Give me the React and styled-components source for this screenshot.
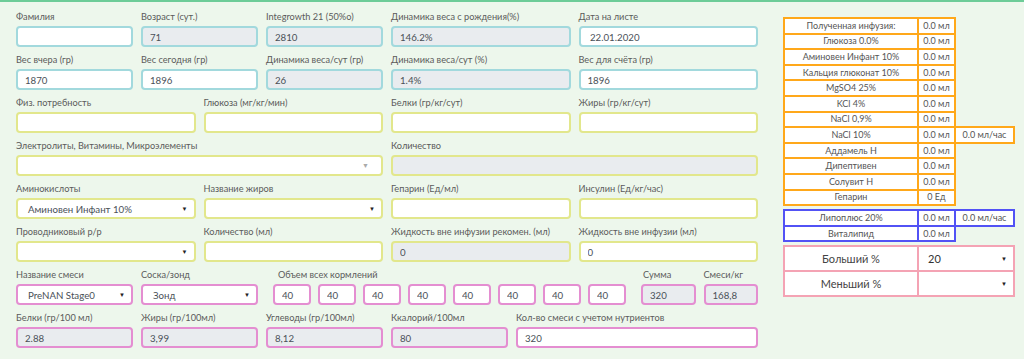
import React from "react";
import styled, { createGlobalStyle } from "styled-components";

const GlobalStyle = createGlobalStyle`
  html, body {
    margin: 0;
    padding: 0;
    background: #edf7ec;
  }
  body {
    font-family: Lato, "Open Sans", sans-serif;
  }
`;

const tones = {
  teal: "#a2d9dd",
  yellow: "#e2e78c",
  pink: "#e48ed1",
};

const Page = styled.div`
  display: flex;
  align-items: flex-start;
  gap: 25px;
  min-height: 359px;
  box-sizing: border-box;
  padding: 9px 0 0 16px;
  border-top: 2px solid #6dcc98;
  background: #edf7ec;
`;

const Form = styled.div`
  width: 742px;
  flex-shrink: 0;
  display: flex;
  flex-direction: column;
  gap: 7px;
`;

const Row = styled.div`
  display: grid;
  grid-template-columns: repeat(12, 1fr);
  column-gap: 8px;
`;

const Field = styled.div`
  grid-column: span ${(p) => p.$span || 2};
  display: flex;
  flex-direction: column;
  min-width: 0;
`;

const Label = styled.label`
  font-size: 9.2px;
  line-height: 12px;
  color: #5b5b5b;
  margin-bottom: 3px;
  padding-left: ${(p) => p.$indent || 0}px;
  white-space: nowrap;
`;

const Input = styled.input`
  box-sizing: border-box;
  width: 100%;
  height: 21px;
  margin: 0;
  padding: 0 7px;
  border: 2px solid ${(p) => tones[p.$tone]};
  border-radius: 4px;
  background: ${(p) => (p.$grey ? "#e9ecef" : "#fff")};
  font: 9.7px Lato, "Open Sans", sans-serif;
  color: #495057;
  outline: none;
`;

const Select = styled.div`
  box-sizing: border-box;
  height: 21px;
  display: flex;
  align-items: center;
  justify-content: space-between;
  padding: 0 6px 0 10px;
  border: 2px solid ${(p) => tones[p.$tone]};
  border-radius: 4px;
  background: #fff;
  font-size: 9.7px;
  color: #495057;
  white-space: nowrap;
`;

const Arrow = styled.span`
  font-size: ${(p) => (p.$muted ? "7px" : "6px")};
  color: ${(p) => (p.$muted ? "#aaa" : "#222")};
  margin-right: ${(p) => (p.$muted ? "6px" : "0")};
  line-height: 1;
`;

const Feeds = styled.div`
  display: flex;
  gap: 7px;
  padding: 0 7px;
`;

const Side = styled.div`
  width: 230px;
  margin-top: 6px;
  display: flex;
  flex-direction: column;
  gap: 3px;
`;

const InfTable = styled.table`
  border-collapse: collapse;
  table-layout: fixed;
  width: 230px;
  font-size: 9px;
  color: #555;

  td {
    border: 2px solid ${(p) => p.$color};
    background: #fff;
    padding: 0;
    height: 13.6px;
    line-height: 12px;
    text-align: center;
    white-space: nowrap;
    overflow: hidden;
  }
`;

const ChoiceTable = styled.table`
  border-collapse: collapse;
  table-layout: fixed;
  width: 230px;
  font-size: 11px;
  color: #444;

  td {
    border: 2px solid #f4a3b4;
    background: #fff;
    height: 23px;
    padding: 0;
    text-align: center;
  }
`;

const ChoiceValue = styled.div`
  display: flex;
  align-items: center;
  justify-content: space-between;
  padding: 0 6px 0 9px;
  color: #333;
`;

function TextField({ span, label, tone, value = "", grey, indent }) {
  return (
    <Field $span={span}>
      <Label $indent={indent}>{label}</Label>
      <Input $tone={tone} $grey={grey} defaultValue={value} readOnly />
    </Field>
  );
}

function SelectField({ span, label, tone, value = "", muted }) {
  return (
    <Field $span={span}>
      <Label>{label}</Label>
      <Select $tone={tone}>
        <span>{value}</span>
        <Arrow $muted={muted}>▼</Arrow>
      </Select>
    </Field>
  );
}

const infusions = [
  ["Полученная инфузия:", "0.0 мл"],
  ["Глюкоза 0.0%", "0.0 мл"],
  ["Аминовен Инфант 10%", "0.0 мл"],
  ["Кальция глюконат 10%", "0.0 мл"],
  ["MgSO4 25%", "0.0 мл"],
  ["KCl 4%", "0.0 мл"],
  ["NaCl 0,9%", "0.0 мл"],
  ["NaCl 10%", "0.0 мл", "0.0 мл/час"],
  ["Аддамель Н", "0.0 мл"],
  ["Дипептивен", "0.0 мл"],
  ["Солувит Н", "0.0 мл"],
  ["Гепарин", "0 Ед"],
];

const lipids = [
  ["Липоплюс 20%", "0.0 мл", "0.0 мл/час"],
  ["Виталипид", "0.0 мл"],
];

function Cols() {
  return (
    <colgroup>
      <col style={{ width: 134 }} />
      <col style={{ width: 37 }} />
      <col style={{ width: 59 }} />
    </colgroup>
  );
}

function Infusion({ rows, color }) {
  return (
    <InfTable $color={color}>
      <Cols />
      <tbody>
        {rows.map((r) => (
          <tr key={r[0]}>
            {r.map((c, i) => (
              <td key={i}>{c}</td>
            ))}
          </tr>
        ))}
      </tbody>
    </InfTable>
  );
}

export default function App() {
  return (
    <>
      <GlobalStyle />
      <Page>
        <Form>
          <Row>
            <TextField label="Фамилия" tone="teal" />
            <TextField label="Возраст (сут.)" tone="teal" value="71" grey />
            <TextField label="Integrowth 21 (50%o)" tone="teal" value="2810" grey />
            <TextField span={3} label="Динамика веса с рождения(%)" tone="teal" value="146.2%" grey />
            <TextField span={3} label="Дата на листе" tone="teal" value=" 22.01.2020" />
          </Row>
          <Row>
            <TextField label="Вес вчера (гр)" tone="teal" value="1870" />
            <TextField label="Вес сегодня (гр)" tone="teal" value="1896" />
            <TextField label="Динамика веса/сут (гр)" tone="teal" value="26" grey />
            <TextField span={3} label="Динамика веса/сут (%)" tone="teal" value="1.4%" grey />
            <TextField span={3} label="Вес для счёта (гр)" tone="teal" value="1896" />
          </Row>
          <Row>
            <TextField span={3} label="Физ. потребность" tone="yellow" />
            <TextField span={3} label="Глюкоза (мг/кг/мин)" tone="yellow" />
            <TextField span={3} label="Белки (гр/кг/сут)" tone="yellow" />
            <TextField span={3} label="Жиры (гр/кг/сут)" tone="yellow" />
          </Row>
          <Row>
            <SelectField span={6} label="Электролиты, Витамины, Микроэлементы" tone="yellow" muted />
            <TextField span={6} label="Количество" tone="yellow" grey />
          </Row>
          <Row>
            <SelectField span={3} label="Аминокислоты" tone="yellow" value="Аминовен Инфант 10%" />
            <SelectField span={3} label="Название жиров" tone="yellow" />
            <TextField span={3} label="Гепарин (Ед/мл)" tone="yellow" />
            <TextField span={3} label="Инсулин (Ед/кг/час)" tone="yellow" />
          </Row>
          <Row>
            <SelectField span={3} label="Проводниковый р/р" tone="yellow" />
            <TextField span={3} label="Количество (мл)" tone="yellow" />
            <TextField span={3} label="Жидкость вне инфузии рекомен. (мл)" tone="yellow" value="0" grey />
            <TextField span={3} label="Жидкость вне инфузии (мл)" tone="yellow" value="0" />
          </Row>
          <Row>
            <SelectField label="Название смеси" tone="pink" value="PreNAN Stage0" />
            <SelectField label="Соска/зонд" tone="pink" value="Зонд" />
            <Field $span={6}>
              <Label $indent={12}>Объем всех кормлений</Label>
              <Feeds>
                {Array.from({ length: 8 }, (_, i) => (
                  <Input key={i} $tone="pink" defaultValue="40" readOnly />
                ))}
              </Feeds>
            </Field>
            <TextField span={1} label="Сумма" tone="pink" value="320" grey indent={2} />
            <TextField span={1} label="Смеси/кг" tone="pink" value="168,8" grey />
          </Row>
          <Row>
            <TextField label="Белки (гр/100 мл)" tone="pink" value="2.88" grey />
            <TextField label="Жиры (гр/100мл)" tone="pink" value="3,99" grey />
            <TextField label="Углеводы (гр/100мл)" tone="pink" value="8,12" grey />
            <TextField label="Ккалорий/100мл" tone="pink" value="80" grey />
            <TextField span={4} label="Кол-во смеси с учетом нутриентов" tone="pink" value="320" />
          </Row>
        </Form>

        <Side>
          <Infusion rows={infusions} color="#ffa81a" />
          <Infusion rows={lipids} color="#5252f5" />
          <ChoiceTable>
            <colgroup>
              <col style={{ width: 134 }} />
              <col style={{ width: 96 }} />
            </colgroup>
            <tbody>
              <tr>
                <td>Больший %</td>
                <td>
                  <ChoiceValue>
                    <span>20</span>
                    <Arrow>▼</Arrow>
                  </ChoiceValue>
                </td>
              </tr>
              <tr>
                <td>Меньший %</td>
                <td>
                  <ChoiceValue>
                    <span />
                    <Arrow>▼</Arrow>
                  </ChoiceValue>
                </td>
              </tr>
            </tbody>
          </ChoiceTable>
        </Side>
      </Page>
    </>
  );
}
